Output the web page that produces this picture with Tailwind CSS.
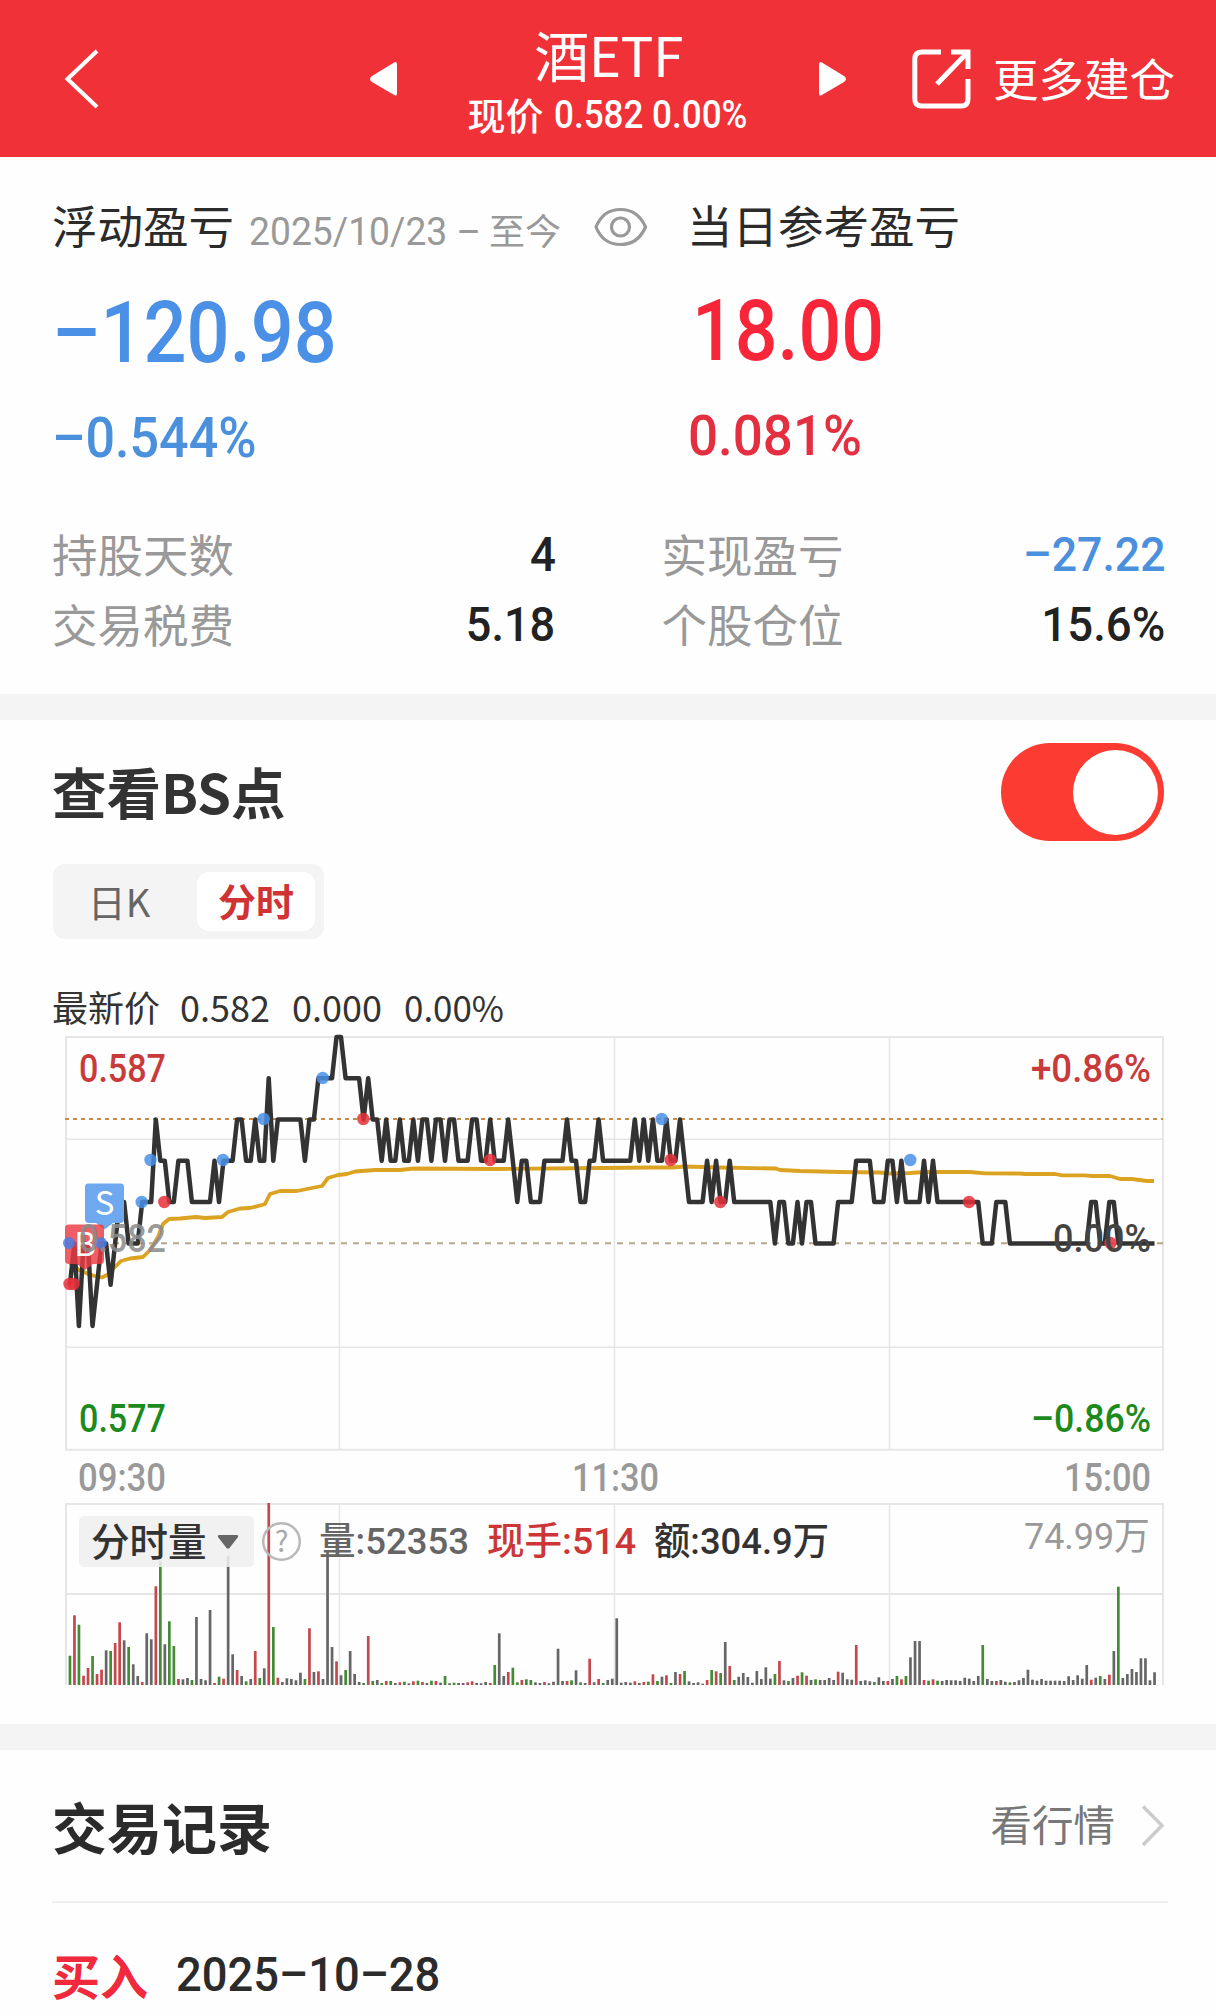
<!DOCTYPE html>
<html lang="zh-CN">
<head>
  <meta charset="UTF-8">
  <meta name="viewport" content="width=device-width, initial-scale=1.0">
  <title>酒ETF</title>
  <script src="https://cdn.jsdelivr.net/npm/@tailwindcss/browser@4"></script>
</head>
<body class="bg-[#fefefe] w-[1216px] h-[2016px] overflow-hidden font-['Noto_Sans_CJK_SC',sans-serif] text-[#2b2b2b]">

  <!-- Header -->
  <header class="h-[157px] bg-[#f03138] text-white flex items-center">
    <svg class="ml-[63px] w-[38px] h-[64px]" viewBox="63 47 38 64" fill="none" stroke="#fff" stroke-width="4"><path d="M97 51 L67.500 79 L97 107"/></svg>
    <svg class="ml-[267px] w-[32px] h-[40px]" viewBox="368 59 32 40" fill="#fff"><path d="M395 62 Q397 62 397 64 V94 Q397 96 395 95.500 L372 82 Q368 79 372 76 Z"/></svg>
    <div class="w-[417px] flex flex-col items-center h-full pt-[24px]">
      <div class="text-[55px] leading-[58px] whitespace-nowrap tracking-[-0.5px]">酒ETF</div>
      <div class="flex items-center mt-[13px] h-[40px] whitespace-nowrap">
        <span class="text-[38px] leading-none pb-[2px] font-medium">现价</span>
        <span class="ml-[10px] w-[196px] font-[Roboto] font-medium text-[38.500px] leading-none inline-block origin-left scale-x-[0.910]">0.582 0.00%</span>
      </div>
    </div>
    <svg class="w-[32px] h-[40px]" viewBox="817 59 32 40" fill="#fff"><path d="M821 62 Q819 62 819 64 V94 Q819 96 821 95.500 L844 82 Q848 79 844 76 Z"/></svg>
    <svg class="ml-[61px] w-[62px] h-[62px]" viewBox="910 48 62 62" fill="none" stroke="#fff" stroke-width="5">
      <path d="M941 52 H922 Q914.800 52 914.800 59 V99 Q914.800 106 922 106 H961 Q968 106 968 99 V79"/>
      <path d="M951 52 H968 V69 M968 52 L937 84"/>
    </svg>
    <span class="ml-[21px] text-[45.500px] leading-none pb-[1px] whitespace-nowrap">更多建仓</span>
  </header>

  <!-- Profit summary -->
  <section class="h-[537px] pt-[43px] px-[52px] whitespace-nowrap">
    <div class="flex items-center h-[50px] leading-none">
      <span class="text-[45.500px]">浮动盈亏</span>
      <span class="ml-[15px] mt-[14px] w-[240px] font-[Roboto] text-[38.500px] text-[#999] inline-block origin-left scale-x-[0.968]">2025/10/23 –</span>
      <span class="mt-[7px] text-[36px] text-[#999]">至今</span>
      <svg class="ml-[31px] mt-[3px] w-[56px] h-[42px]" viewBox="592 205 56 42" fill="none" stroke="#999" stroke-width="3.200">
        <path d="M596 226 Q603 208.500 620.500 208.500 Q638 208.500 645.500 226 Q638 243.500 620.500 243.500 Q603 243.500 596 226 Z"/>
        <circle cx="620.500" cy="226" r="9"/>
      </svg>
      <span class="ml-[39px] text-[45.500px]">当日参考盈亏</span>
    </div>
    <div class="mt-[40px] flex items-center h-[86px] leading-none font-[Roboto] font-medium text-[86px]">
      <span class="w-[640px] text-[#4a90e6] inline-block"><span class="inline-block origin-left scale-x-[0.88]">–120.98</span></span>
      <span class="text-[#f9263a] inline-block origin-left scale-x-[0.875] pb-1">18.00</span>
    </div>
    <div class="mt-[34px] flex items-center h-[56px] leading-none font-[Roboto] font-medium text-[56px]">
      <span class="w-[636px] text-[#4a90dc] inline-block"><span class="inline-block origin-left scale-x-[0.93]">–0.544%</span></span>
      <span class="text-[#e32f40] inline-block origin-left scale-x-[0.945] pb-1">0.081%</span>
    </div>
    <div class="mt-[63px] -mr-px grid grid-cols-2 gap-x-[106px] gap-y-[20px] leading-none text-[45.500px] text-[#999]">
      <div class="flex items-center justify-between h-[50px]">
        <span>持股天数</span>
        <span class="font-[Roboto] font-medium text-[49px] text-[#222] inline-block origin-right scale-x-[0.93]">4</span>
      </div>
      <div class="flex items-center justify-between h-[50px]">
        <span>实现盈亏</span>
        <span class="font-[Roboto] font-medium text-[49px] text-[#4a90dc] inline-block origin-right scale-x-[0.91]">–27.22</span>
      </div>
      <div class="flex items-center justify-between h-[50px]">
        <span>交易税费</span>
        <span class="font-[Roboto] font-medium text-[49px] text-[#222] inline-block origin-right scale-x-[0.92]">5.18</span>
      </div>
      <div class="flex items-center justify-between h-[50px]">
        <span>个股仓位</span>
        <span class="font-[Roboto] font-medium text-[49px] text-[#222] inline-block origin-right scale-x-[0.93]">15.6%</span>
      </div>
    </div>
  </section>

  <div class="h-[26px] bg-[#f4f4f4]"></div>

  <!-- Intraday chart with buy / sell points -->
  <section class="h-[1004px] pt-[23px]">
    <div class="flex items-center justify-between h-[98px] px-[52px]">
      <h2 class="text-[54.500px] leading-none font-bold text-[#333] pb-px">查看BS点</h2>
      <div class="w-[163px] h-[98px] rounded-full bg-[#fc3c32] flex items-center justify-end pr-[6px]">
        <div class="size-[85px] rounded-full bg-white"></div>
      </div>
    </div>
    <div class="mt-[23px] ml-[53px] w-[271px] h-[75px] rounded-xl bg-[#f4f4f4] flex items-center leading-none">
      <span class="w-[144px] text-center text-[38px] text-[#666] pb-[2px] -indent-3">日K</span>
      <span class="w-[118px] h-[59px] rounded-xl bg-white text-center text-[38px] leading-[56px] font-bold text-[#cf3333]">分时</span>
    </div>
    <div class="mt-[47px] ml-[52px] h-[40px] flex items-center text-[36px] leading-none text-[#333] whitespace-nowrap">
      <span class="w-[128px]">最新价</span>
      <span class="w-[112px]">0.582</span>
      <span class="w-[112px]">0.000</span>
      <span class="inline-block origin-left scale-x-[0.97]">0.00%</span>
    </div>
    <svg class="block w-[1216px] h-[698px]" viewBox="0 1026 1216 698">
      <g fill="none" stroke="#e6e6e8" stroke-width="1.500">
        <path stroke-width="2" d="M66 1037 H1163 V1449.700 H66 Z"/>
        <path d="M66 1139.300 H1163 M66 1347.300 H1163 M339.500 1037 V1449.700 M614.500 1037 V1449.700 M889.500 1037 V1449.700"/>
        <path stroke-width="2" d="M66 1685 V1504 H1163 V1685 M66 1594 H1163"/>
        <path d="M339.500 1504 V1685 M614.500 1504 V1685 M889.500 1504 V1685"/>
      </g>
      <path d="M65 1119 H1163" stroke="#c58b45" stroke-width="2" stroke-dasharray="4 4"/>
      <path d="M65 1243.300 H1163" stroke="#b8a68c" stroke-width="2" stroke-dasharray="6 6"/>
      <polyline fill="none" stroke="#dba321" stroke-width="3.800" stroke-linejoin="round" points="70,1263 79,1270 90,1274.700 95,1276 102,1277.500 107,1275 115,1267 121,1261 130,1258.500 143,1257 150,1250 158,1237 163,1224 169,1219 180,1218.500 196,1217 205,1218 222,1217 228,1212 240,1208.500 250,1208 262,1205 265,1204 270,1194 280,1191 297,1191 307,1189 322,1186 328,1178 338,1175 347,1174 355,1171.500 375,1170 400,1170 414,1168.500 500,1169 600,1168 650,1167.500 672,1167.500 685,1166.500 720,1167.500 776,1168.500 780,1170 800,1171 840,1172 880,1172.500 890,1173.500 910,1173 925,1172 970,1172 985,1173.300 1020,1173.500 1025,1174 1055,1174 1062,1175.300 1085,1175.300 1092,1176 1110,1176 1120,1179 1132,1179 1147,1181 1154,1181"/>
      <polyline id="price" fill="none" stroke="#333" stroke-width="4.500" stroke-linejoin="round"/>
      <g id="dots"></g>

      <!-- S / B markers -->
      <path d="M88 1183.500 H121 Q124 1183.500 124 1187 V1219 Q124 1223 120 1223 H113 L104.500 1229.500 L96 1223 H89 Q85 1223 85 1219 V1187 Q85 1183.500 88 1183.500 Z" fill="#6ea9f0"/>
      <text x="104.500" y="1215" text-anchor="middle" font-size="33" fill="#fff">S</text>
      <path d="M69 1224.500 H101 Q104 1224.500 104 1228 V1260 Q104 1264 100 1264 H93 L85 1270 L77 1264 H69 Q65 1264 65 1260 V1228 Q65 1224.500 69 1224.500 Z" fill="#ea3a42" fill-opacity="0.820"/>
      <text x="85" y="1256" text-anchor="middle" font-size="33" fill="#fff">B</text>
      <circle cx="69" cy="1243" r="6" fill="#4a7fe0" fill-opacity="0.850"/>
      <circle cx="101" cy="1243" r="6" fill="#4a7fe0" fill-opacity="0.850"/>

      <g font-family="Roboto" font-size="38" font-weight="500">
        <text x="79" y="1082" textLength="87" lengthAdjust="spacingAndGlyphs" fill="#c93a3a">0.587</text>
        <text x="1031" y="1082" textLength="120" lengthAdjust="spacingAndGlyphs" fill="#c93a3a">+0.86%</text>
        <text x="79" y="1252" textLength="87" lengthAdjust="spacingAndGlyphs" fill="#8c8c8c" fill-opacity="0.900">0.582</text>
        <text x="1053" y="1252" textLength="98" lengthAdjust="spacingAndGlyphs" fill="#444">0.00%</text>
        <text x="79" y="1432" textLength="87" lengthAdjust="spacingAndGlyphs" fill="#1c8a1c">0.577</text>
        <text x="1031" y="1432" textLength="120" lengthAdjust="spacingAndGlyphs" fill="#1c8a1c">–0.86%</text>
        <text x="78" y="1491" textLength="88" lengthAdjust="spacingAndGlyphs" fill="#999">09:30</text>
        <text x="572" y="1491" textLength="87" lengthAdjust="spacingAndGlyphs" fill="#999">11:30</text>
        <text x="1064" y="1491" textLength="87" lengthAdjust="spacingAndGlyphs" fill="#999">15:00</text>
      </g>

      <g id="volume"></g>

      <!-- Volume legend -->
      <rect x="79" y="1516" width="175" height="51" rx="5" fill="#efefef" fill-opacity="0.880"/>
      <text x="91" y="1556" font-size="38.500" fill="#333" font-weight="500">分时量</text>
      <path d="M219 1535 H237 Q239 1535.500 238 1537 L229.500 1548 Q228 1549.500 226.500 1548 L218 1537 Q217 1535.500 219 1535 Z" fill="#666"/>
      <circle cx="281.500" cy="1541.500" r="18.300" fill="none" stroke="#b9b9b9" stroke-width="2.500"/>
      <text x="281.500" y="1551.500" text-anchor="middle" font-size="29" fill="#aaa">?</text>
      <g font-size="37.500" font-weight="500" font-family="Roboto, 'Noto Sans CJK SC', sans-serif">
        <text x="319" y="1554" textLength="150" lengthAdjust="spacingAndGlyphs" fill="#666">量:52353</text>
        <text x="487" y="1554" textLength="149" lengthAdjust="spacingAndGlyphs" fill="#cc3636">现手:514</text>
        <text x="654" y="1554" textLength="175" lengthAdjust="spacingAndGlyphs" fill="#333">额:304.9万</text>
        <text x="1024" y="1549" textLength="126" lengthAdjust="spacingAndGlyphs" fill="#999" font-weight="400">74.99万</text>
      </g>
    </svg>
  </section>

  <div class="h-[26px] bg-[#f4f4f4]"></div>

  <!-- Trade records -->
  <section class="px-[52px] whitespace-nowrap">
    <div class="-mr-[4px] pr-[3px] h-[153px] border-b-2 border-[#f0f0f0] flex items-center justify-between leading-none">
      <h2 class="text-[55px] font-bold">交易记录</h2>
      <div class="flex items-center">
        <span class="text-[41.500px] text-[#777] pb-[3px]">看行情</span>
        <svg class="ml-[26px] w-[24px] h-[44px]" viewBox="1142 1804 24 44" fill="none" stroke="#ccc" stroke-width="3.500"><path d="M1144 1806.500 L1163 1825.500 L1144 1845"/></svg>
      </div>
    </div>
    <div class="h-[142px] flex items-center leading-none">
      <span class="text-[48px] font-bold text-[#f0293c]">买入</span>
      <span class="ml-[28px] font-[Roboto] font-medium text-[49px] text-[#2b2b2b] inline-block origin-left scale-x-[0.925]">2025–10–28</span>
    </div>
  </section>

<script>
// One digit per minute: steps of 0.001 above 0.580
const PRICES =
  '1202201221' + '2332223335' + '4433444333' + '3343444554' + '4544645555' +
  '5545566667' + '7666656554' + '5445445455' + '4554554445' + '5445444543' +
  '4433344444' + '5443344544' + '4444454545' + '4454454333' + '3434334333' +
  '3333332332' + '2323322222' + '3333444433' + '3443433334' + '3433333333' +
  '3322233322' + '2222222222' + '2222223322' + '33222222222';

// Volume per minute: r = up, g = down, k = flat
const VOLUME = `
g88 r209 g181 r28 r51 g87 r33 r46 k104 g102 r126 r188 k134 g114 k62 k27 r9 k155 k137 r296
g373 k122 g191 g117 r18 k17 k21 g15 k204 k18 k14 k225 r6 g25 r19 k388 k92 r45 k27 g11
k18 r102 g21 k50 r546 g174 r22 k9 k20 k18 k14 k37 g18 r170 k39 r41 k18 k400 k114 r71
k29 g45 k102 k33 k9 g6 r147 g12 k15 g6 r12 g12 k6 r8 g10 k5 r11 g13 r9 k6
g13 r12 k7 g27 k5 g7 k6 k6 r8 r11 k6 k5 k9 r6 g60 k155 k27 r39 g52 g8
r15 g17 g15 k8 k6 r9 k5 k10 k109 k12 r12 g14 k44 g8 k6 r79 k8 r18 g6 k15
k19 k200 k7 k9 k7 r11 k6 r9 g10 r32 g12 k25 r29 g6 k39 r33 g42 k11 k6 k8
k4 r15 g45 r41 g36 k129 r57 g15 k25 k36 k24 k7 k42 k18 k53 k19 g33 r72 k14 g12
k21 r28 g38 r28 k15 g17 k15 k15 k21 k15 r40 k37 k17 k16 r120 k12 k14 k11 g9 k23
k12 r12 k18 g27 r17 g27 k83 k132 k132 r15 g13 r17 g13 k12 k15 k14 k14 k12 k22 k19
k12 k27 g120 k18 k12 r12 k15 k10 g8 k9 k14 k21 k46 k16 k13 k18 k13 k13 k13 k13
k12 k26 k15 k29 k19 k60 r16 k22 g27 k18 r31 k102 g295 k21 k33 k48 k39 k80 k80 k14 k38`.trim().split(/\s+/);

const DOTS = [
  ['b', 141.7, 1202], ['b', 150.5, 1160], ['b', 223, 1160], ['b', 263.7, 1119], ['b', 322.7, 1078],
  ['b', 661.7, 1119], ['b', 910.3, 1160],
  ['r', 69.5, 1284], ['r', 73.5, 1284], ['r', 164.3, 1202], ['r', 363.3, 1119], ['r', 490, 1160],
  ['r', 670.7, 1160], ['r', 720.3, 1202], ['r', 969, 1202], ['r', 1110.5, 1243],
];

const BAR_COLORS = { r: '#c4484c', g: '#448c34', k: '#666666' };
const DOT_COLORS = { b: '#4a90e6', r: '#e6303a' };
const X0 = 69.9, STEP = 4.519;

document.getElementById('price').setAttribute('points',
  [...PRICES].map((p, i) => (X0 + i * STEP).toFixed(1) + ',' + (1326 - p * 41.3).toFixed(1)).join(' '));

document.getElementById('volume').innerHTML = VOLUME.map((v, i) => {
  const h = v.slice(1) / 3;
  return `<rect x="${(X0 + i * STEP - 1.3).toFixed(1)}" y="${(1685 - h).toFixed(1)}" width="2.7" height="${h.toFixed(1)}" fill="${BAR_COLORS[v[0]]}"/>`;
}).join('');

document.getElementById('dots').innerHTML = DOTS.map(([c, x, y]) =>
  `<circle cx="${x}" cy="${y}" r="6.2" fill="${DOT_COLORS[c]}" fill-opacity="0.85"/>`).join('');
</script>
</body>
</html>
